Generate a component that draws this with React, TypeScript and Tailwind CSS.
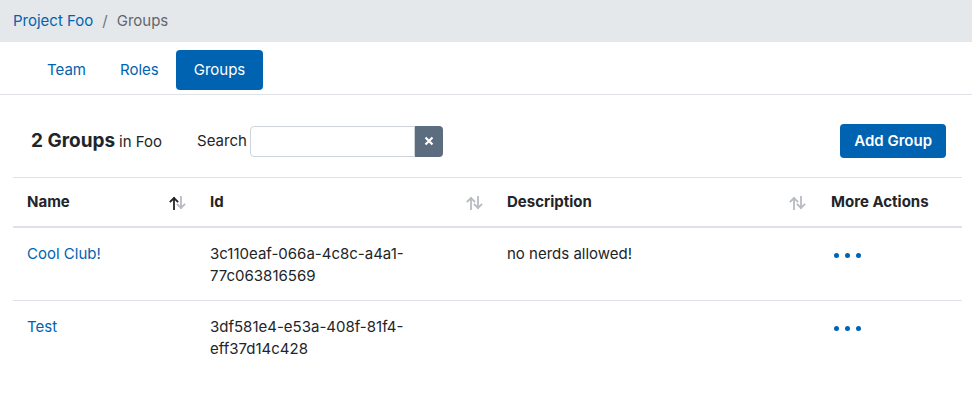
import React from "react";

const font = { fontFamily: "Inter, 'Noto Sans', 'Liberation Sans', sans-serif" };

function SortIcon({ active = false }: { active?: boolean }) {
  const up = active ? "#212529" : "#b8bcc0";
  const down = "#b8bcc0";
  return (
    <svg width="18" height="14" viewBox="0 0 18 14" fill="none">
      <path d="M5 13V2M1.5 5.5L5 2l3.5 3.5" stroke={up} strokeWidth="1.8" strokeLinecap="square" />
      <path d="M12 1v11M8.5 8.5L12 12l3.5-3.5" stroke={down} strokeWidth="1.8" strokeLinecap="square" />
    </svg>
  );
}

function Dots() {
  return (
    <div className="flex items-center gap-[6px] pt-[10px] pl-[3px]">
      <span className="block w-[5px] h-[5px] rounded-full bg-[#0063b1]" />
      <span className="block w-[5px] h-[5px] rounded-full bg-[#0063b1]" />
      <span className="block w-[5px] h-[5px] rounded-full bg-[#0063b1]" />
    </div>
  );
}

const rows = [
  { name: "Cool Club!", id: ["3c110eaf-066a-4c8c-a4a1-", "77c063816569"], desc: "no nerds allowed!" },
  { name: "Test", id: ["3df581e4-e53a-408f-81f4-", "eff37d14c428"], desc: "" },
];

const cols = "grid grid-cols-[183px_297px_324px_1fr]";

export default function App() {
  return (
    <div className="w-[972px] h-[399px] bg-white text-[#212529] text-[15px]" style={font}>
      <div className="h-[42px] bg-[#e5e8eb] flex items-center pl-[13px] text-[15px]">
        <span className="text-[#0063b1]">Project Foo</span>
        <span className="text-[#6c757d] mx-[9px]">/</span>
        <span className="text-[#5f666d]">Groups</span>
      </div>

      <div className="flex items-center pl-[30px] pt-[8px] pb-[4px] border-b border-[#dee2e6] text-[15px]">
        <span className="h-[40px] px-[17px] flex items-center text-[#0063b1]">Team</span>
        <span className="h-[40px] px-[17px] flex items-center text-[#0063b1]">Roles</span>
        <span className="h-[40px] px-[18px] flex items-center text-white bg-[#0063b1] rounded-[4px]">Groups</span>
      </div>

      <div className="pl-[13px] pr-[10px]">
        <div className="flex items-center pl-[18px] pr-[16px] pt-[29px] pb-[19px]">
          <div className="flex items-baseline">
            <span className="text-[19px] font-bold">2 Groups</span>
            <span className="text-[15px] ml-[4px]">in Foo</span>
          </div>
          <span className="ml-[35px] text-[15px]">Search</span>
          <div className="ml-[3px] flex h-[31px]">
            <div className="w-[165px] border border-[#ced4da] rounded-l-[4px] bg-white" />
            <div className="w-[28px] bg-[#5b6d7e] rounded-r-[4px] flex items-center justify-center">
              <svg width="10" height="10" viewBox="0 0 10 10">
                <path d="M1.5 1.5l7 7M8.5 1.5l-7 7" stroke="white" strokeWidth="2.2" />
              </svg>
            </div>
          </div>
          <button className="ml-auto h-[34px] px-[14px] bg-[#0063b1] text-white font-semibold text-[15px] rounded-[4px]">
            Add Group
          </button>
        </div>

        <div className="border-t border-[#dee2e6]">
          <div className={`${cols} h-[50px] pt-[1px] items-center border-b-2 border-[#dee2e6] font-bold`}>
            <div className="flex items-center justify-between pl-[14px] pr-[9px]">
              <span>Name</span>
              <SortIcon active />
            </div>
            <div className="flex items-center justify-between pl-[14px] pr-[9px]">
              <span>Id</span>
              <SortIcon />
            </div>
            <div className="flex items-center justify-between pl-[14px] pr-[10px]">
              <span>Description</span>
              <SortIcon />
            </div>
            <div className="pl-[14px]">More Actions</div>
          </div>
          {rows.map((r, i) => (
            <div
              key={r.name}
              className={`${cols} pt-[15px] pb-[13px] leading-[22px] ${i === 0 ? "border-b border-[#dee2e6]" : ""}`}
            >
              <div className="pl-[14px] text-[#0063b1]">{r.name}</div>
              <div className="pl-[14px]">
                {r.id[0]}
                <br />
                {r.id[1]}
              </div>
              <div className="pl-[14px]">{r.desc}</div>
              <div className="pl-[14px]">
                <Dots />
              </div>
            </div>
          ))}
        </div>
      </div>
    </div>
  );
}
